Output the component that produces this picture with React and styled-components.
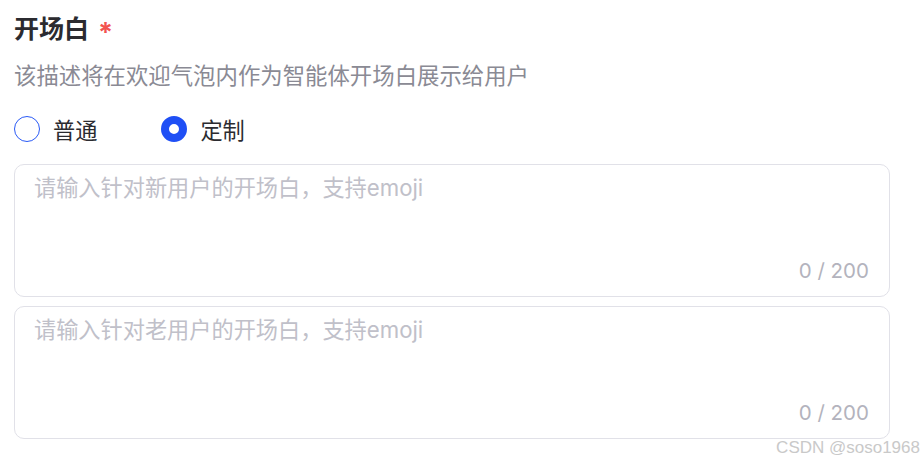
import React, { useState } from "react";
import styled, { createGlobalStyle } from "styled-components";

const Global = createGlobalStyle`
  html, body {
    margin: 0;
    padding: 0;
    background: #fff;
  }
  body {
    font-family: Inter, "Noto Sans CJK SC", sans-serif;
  }
`;

const Page = styled.div`
  position: relative;
  width: 924px;
  height: 464px;
  box-sizing: border-box;
  padding: 12px 34px 0 14px;
  overflow: hidden;
`;

const Title = styled.h2`
  margin: 0;
  display: flex;
  align-items: center;
  gap: 9px;
  font-size: 25px;
  line-height: 34px;
  font-weight: 600;
  color: #2b2b30;
  span {
    color: #f25450;
    font-size: 27px;
    font-weight: 700;
    line-height: 1;
    padding-top: 6px;
  }
`;

const Desc = styled.p`
  margin: 15px 0 0;
  font-size: 22.4px;
  line-height: 30px;
  color: #8a8a94;
`;

const RadioRow = styled.div`
  display: flex;
  align-items: center;
  gap: 64px;
  margin-top: 23px;
  height: 30px;
`;

const RadioItem = styled.label`
  display: flex;
  align-items: center;
  gap: 13px;
  font-size: 22.2px;
  color: #2b2b30;
  cursor: pointer;
`;

const Dot = styled.span`
  box-sizing: border-box;
  width: 26px;
  height: 26px;
  border-radius: 50%;
  border: ${(p) => (p.$on ? "8.5px solid #1f4ff5" : "1.5px solid #2a5af6")};
  background: #fff;
`;

const Field = styled.div`
  position: relative;
  box-sizing: border-box;
  height: 133px;
  margin-top: ${(p) => p.$gap}px;
  border: 1px solid #e1e1e8;
  border-radius: 10px;
  background: #fff;
`;

const Area = styled.textarea`
  box-sizing: border-box;
  display: block;
  width: 100%;
  height: 92px;
  padding: 8px 19px 0;
  border: none;
  outline: none;
  resize: none;
  background: transparent;
  font-family: Inter, "Noto Sans CJK SC", sans-serif;
  font-size: 22.2px;
  line-height: 30px;
  color: #2b2b30;
  &::placeholder {
    color: #c0c0c9;
  }
`;

const Count = styled.div`
  display: flex;
  justify-content: flex-end;
  padding: 0 20px;
  font-size: 20.5px;
  line-height: 28px;
  color: #b3b3bd;
`;

const Watermark = styled.div`
  position: absolute;
  right: 4px;
  bottom: 6px;
  font-family: "Liberation Sans", Arial, sans-serif;
  font-size: 17px;
  color: #c9c9c9;
  text-shadow: 0 0 1px #fff;
`;

const fields = [
  { ph: "请输入针对新用户的开场白，支持emoji", gap: 20 },
  { ph: "请输入针对老用户的开场白，支持emoji", gap: 9 },
];

export default function App() {
  const [mode, setMode] = useState("custom");
  const [vals, setVals] = useState(["", ""]);

  return (
    <Page>
      <Global />
      <Title>
        开场白<span>*</span>
      </Title>
      <Desc>该描述将在欢迎气泡内作为智能体开场白展示给用户</Desc>
      <RadioRow>
        <RadioItem onClick={() => setMode("normal")}>
          <Dot $on={mode === "normal"} />
          普通
        </RadioItem>
        <RadioItem onClick={() => setMode("custom")}>
          <Dot $on={mode === "custom"} />
          定制
        </RadioItem>
      </RadioRow>
      {fields.map((f, i) => (
        <Field key={i} $gap={f.gap}>
          <Area
            placeholder={f.ph}
            maxLength={200}
            value={vals[i]}
            onChange={(e) => {
              const next = [...vals];
              next[i] = e.target.value;
              setVals(next);
            }}
          />
          <Count>{vals[i].length} / 200</Count>
        </Field>
      ))}
      <Watermark>CSDN @soso1968</Watermark>
    </Page>
  );
}
